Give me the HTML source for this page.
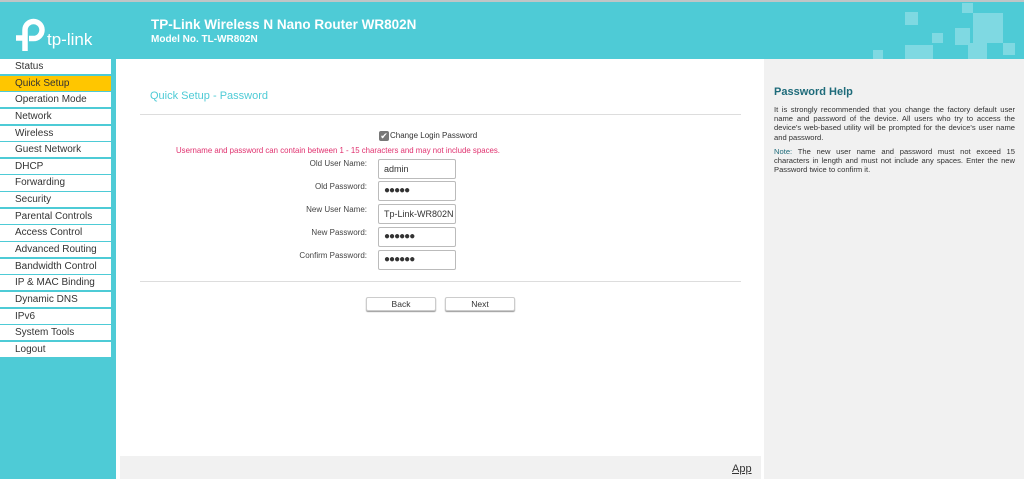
<!DOCTYPE html>
<html><head><meta charset="utf-8"><style>
*{margin:0;padding:0;box-sizing:border-box}
body{width:1024px;height:479px;overflow:hidden;background:#4ecbd6;font-family:"Liberation Sans",sans-serif;position:relative}
.topline{position:absolute;left:0;top:0;width:1024px;height:2px;background:#bfc5c6}
.t1{position:absolute;left:151px;top:17px;color:#fff;font-weight:bold;font-size:13.5px}
.t2{position:absolute;left:151px;top:34px;color:#fff;font-weight:bold;font-size:10px}
.menu{position:absolute;left:0;top:59px;width:111px}
.menu div{height:15.15px;margin-bottom:1.5px;background:#fff;font-size:10px;color:#333;padding-left:15px;line-height:16px}
.menu div.sel{background:#ffc600}
.main{position:absolute;left:116px;top:59px;width:648px;height:420px;background:#fff}
.right{position:absolute;left:764px;top:59px;width:260px;height:420px;background:#f1f1f1}
.bar{position:absolute;left:120px;top:456px;width:641px;height:23px;background:#f1f1f1}
.lbl{position:absolute;font-size:8px;color:#444;text-align:right;width:200px;left:167px}
.in{position:absolute;left:378px;width:78px;height:20px;border:1px solid #bbb;border-radius:2px;background:#fff;font-size:9px;color:#333;padding-left:5px;line-height:18px}
.dots{font-size:10px;letter-spacing:-1px;color:#333}
.btn{position:absolute;top:297px;width:70px;height:14px;border:1px solid #ccc;border-radius:2px;box-shadow:0 1px 1px #999;background:#fff;font-size:8.5px;text-align:center;line-height:12px;color:#333}
</style></head><body>
<div class="topline"></div>
<svg style="position:absolute;left:14px;top:18px" width="90" height="36" viewBox="0 0 90 36">
<g fill="none" stroke="#fff" stroke-width="5.5"><path d="M2 20 H11"/><path d="M11 33 V12 A8.5 8.5 0 1 1 19.5 20.5 H15"/></g>
<text x="33" y="27" fill="#fff" font-size="17" font-family="Liberation Sans">tp-link</text>
</svg>
<svg style="position:absolute;left:0;top:0" width="1024" height="59">
<g fill="#7fd9e2"><rect x="962" y="3" width="11" height="10"/><rect x="973" y="13" width="30" height="30"/><rect x="905" y="12" width="13" height="13"/><rect x="932" y="33" width="11" height="10"/><rect x="955" y="28" width="15" height="17"/><rect x="905" y="45" width="28" height="14"/><rect x="968" y="43" width="19" height="16"/><rect x="873" y="50" width="10" height="9"/><rect x="1003" y="43" width="12" height="12"/></g></svg>
<div class="t1">TP-Link Wireless N Nano Router WR802N</div>
<div class="t2">Model No. TL-WR802N</div>
<div class="menu">
<div>Status</div><div class="sel">Quick Setup</div><div>Operation Mode</div><div>Network</div><div>Wireless</div><div>Guest Network</div><div>DHCP</div><div>Forwarding</div><div>Security</div><div>Parental Controls</div><div>Access Control</div><div>Advanced Routing</div><div>Bandwidth Control</div><div>IP &amp; MAC Binding</div><div>Dynamic DNS</div><div>IPv6</div><div>System Tools</div><div>Logout</div>
</div>
<div class="main"></div>
<div class="right"></div>
<div class="bar"></div>
<div style="position:absolute;left:732px;top:463px;font-size:11px;color:#333;text-decoration:underline">App</div>
<div style="position:absolute;left:150px;top:90px;font-size:11px;color:#4ecbd6">Quick Setup - Password</div>
<div style="position:absolute;left:140px;top:114px;width:601px;height:1px;background:#ddd"></div>
<div style="position:absolute;left:379px;top:131px;width:10px;height:10px;background:#777;border-radius:2px;color:#fff;font-size:9px;line-height:10px;text-align:center">✔</div>
<div style="position:absolute;left:390px;top:131px;font-size:8px;color:#333">Change Login Password</div>
<div style="position:absolute;left:176px;top:146px;font-size:7.85px;color:#e0306e">Username and password can contain between 1 - 15 characters and may not include spaces.</div>
<div class="lbl" style="top:159px">Old User Name:</div><div class="in" style="top:159px">admin</div>
<div class="lbl" style="top:182px">Old Password:</div><div class="in dots" style="top:181px">●●●●●</div>
<div class="lbl" style="top:205px">New User Name:</div><div class="in" style="top:204px">Tp-Link-WR802N</div>
<div class="lbl" style="top:228px">New Password:</div><div class="in dots" style="top:227px">●●●●●●</div>
<div class="lbl" style="top:251px">Confirm Password:</div><div class="in dots" style="top:250px">●●●●●●</div>
<div style="position:absolute;left:140px;top:281px;width:601px;height:1px;background:#ddd"></div>
<div class="btn" style="left:366px">Back</div>
<div class="btn" style="left:445px">Next</div>
<div style="position:absolute;left:774px;top:86px;font-size:11px;font-weight:bold;color:#1e6b7a">Password Help</div>
<div style="position:absolute;left:774px;top:105px;width:241px;font-size:7.6px;color:#333;text-align:justify;line-height:9.2px">It is strongly recommended that you change the factory default user name and password of the device. All users who try to access the device's web-based utility will be prompted for the device's user name and password.<br><div style="height:5px"></div><b style="color:#1e6b7a;font-weight:normal">Note:</b> The new user name and password must not exceed 15 characters in length and must not include any spaces. Enter the new Password twice to confirm it.</div>
</body></html>
